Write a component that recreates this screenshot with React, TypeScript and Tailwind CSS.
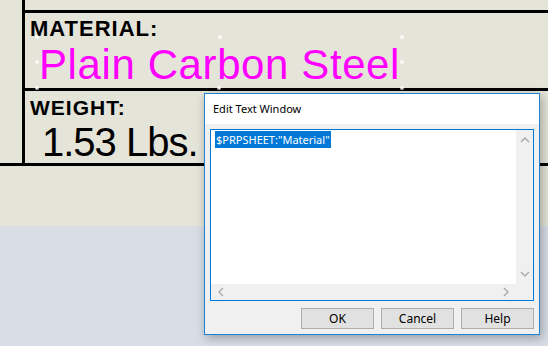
const ui = { fontFamily: '"Segoe UI", "Noto Sans", "Liberation Sans", sans-serif' };
const draw = { fontFamily: '"Liberation Sans", Arial, sans-serif' };

function Handle({ x, y }: { x: number; y: number }) {
  return (
    <span
      className="absolute h-[4px] w-[4px] rounded-full bg-white/80"
      style={{ left: x - 2, top: y - 2 }}
    />
  );
}

function Chevron({ dir }: { dir: "up" | "down" | "left" | "right" }) {
  const d = {
    up: "M1 6 L5 2 L9 6",
    down: "M1 2 L5 6 L9 2",
    left: "M6 1 L2 5 L6 9",
    right: "M2 1 L6 5 L2 9",
  }[dir];
  const vertical = dir === "up" || dir === "down";
  return (
    <svg
      width={vertical ? 10 : 8}
      height={vertical ? 8 : 10}
      viewBox={vertical ? "0 0 10 8" : "0 0 8 10"}
      fill="none"
      stroke="#a6a6a6"
      strokeWidth="1.3"
    >
      <path d={d} />
    </svg>
  );
}

function Button({ label }: { label: string }) {
  return (
    <button className="flex h-[21px] w-[73px] items-center justify-center border border-[#adadad] bg-[#e1e1e1] text-[12px] text-black">
      {label}
    </button>
  );
}

export default function App() {
  return (
    <div className="relative h-[346px] w-[548px] overflow-hidden bg-[#d9dde6]">
      {/* drawing sheet */}
      <div className="h-[226px] bg-[#e5e4d9]">
        <div className="border-b-[3px] border-black">
          <div className="ml-[22px] border-l-[3px] border-black pt-[10px]">
            <div className="h-[78px] border-t-[3px] border-black pl-[5px]" style={draw}>
              <div className="pt-[4px] text-[22px] font-bold leading-[24px] tracking-[1px] text-black">
                MATERIAL:
              </div>
              <div className="pl-[9px] pt-[2px] text-[42px] leading-[44px] tracking-[0.6px] text-[#ff00ff]">
                Plain Carbon Steel
              </div>
            </div>
            <div className="h-[75px] border-t-[3px] border-black pl-[5px]" style={draw}>
              <div className="pt-[5px] text-[21px] font-bold leading-[24px] tracking-[1px] text-black">
                WEIGHT:
              </div>
              <div className="pl-[12px] pt-[1px] text-[40px] leading-[42px] tracking-[-1px] text-black">
                1.53 Lbs.
              </div>
            </div>
          </div>
        </div>
      </div>

      <Handle x={37} y={37} />
      <Handle x={37} y={62} />
      <Handle x={37} y={88} />
      <Handle x={220} y={37} />
      <Handle x={219} y={88} />
      <Handle x={402} y={37} />
      <Handle x={402} y={62} />
      <Handle x={402} y={88} />

      {/* edit text dialog */}
      <div
        className="absolute left-[204px] top-[93px] flex h-[242px] w-[336px] flex-col border border-[#1883d7] bg-[#f0f0f0] shadow-[2px_3px_10px_rgba(0,0,0,0.3)]"
        style={ui}
      >
        <div className="flex h-[30px] items-center bg-white pl-[8px] text-[11px] text-black">
          Edit Text Window
        </div>
        <div className="flex flex-1 flex-col px-[5px] pt-[5px]">
          <div className="flex h-[172px] flex-col border border-[#0078d7] bg-white">
            <div className="flex flex-1">
              <div className="flex-1 pl-[4px] pt-[1px] leading-[14px]">
                <span className="bg-[#0078d7] px-[1px] py-[1px] text-[11px] text-white">
                  $PRPSHEET:"Material"
                </span>
              </div>
              <div className="flex w-[17px] flex-col items-center justify-between bg-[#f0f0f0] py-[6px]">
                <Chevron dir="up" />
                <Chevron dir="down" />
              </div>
            </div>
            <div className="flex h-[16px]">
              <div className="flex flex-1 items-center justify-between bg-[#f0f0f0] px-[6px]">
                <Chevron dir="left" />
                <Chevron dir="right" />
              </div>
              <div className="w-[17px] bg-[#f0f0f0]" />
            </div>
          </div>
          <div className="flex justify-end gap-[7px] pt-[7px]">
            <Button label="OK" />
            <Button label="Cancel" />
            <Button label="Help" />
          </div>
        </div>
      </div>
    </div>
  );
}
